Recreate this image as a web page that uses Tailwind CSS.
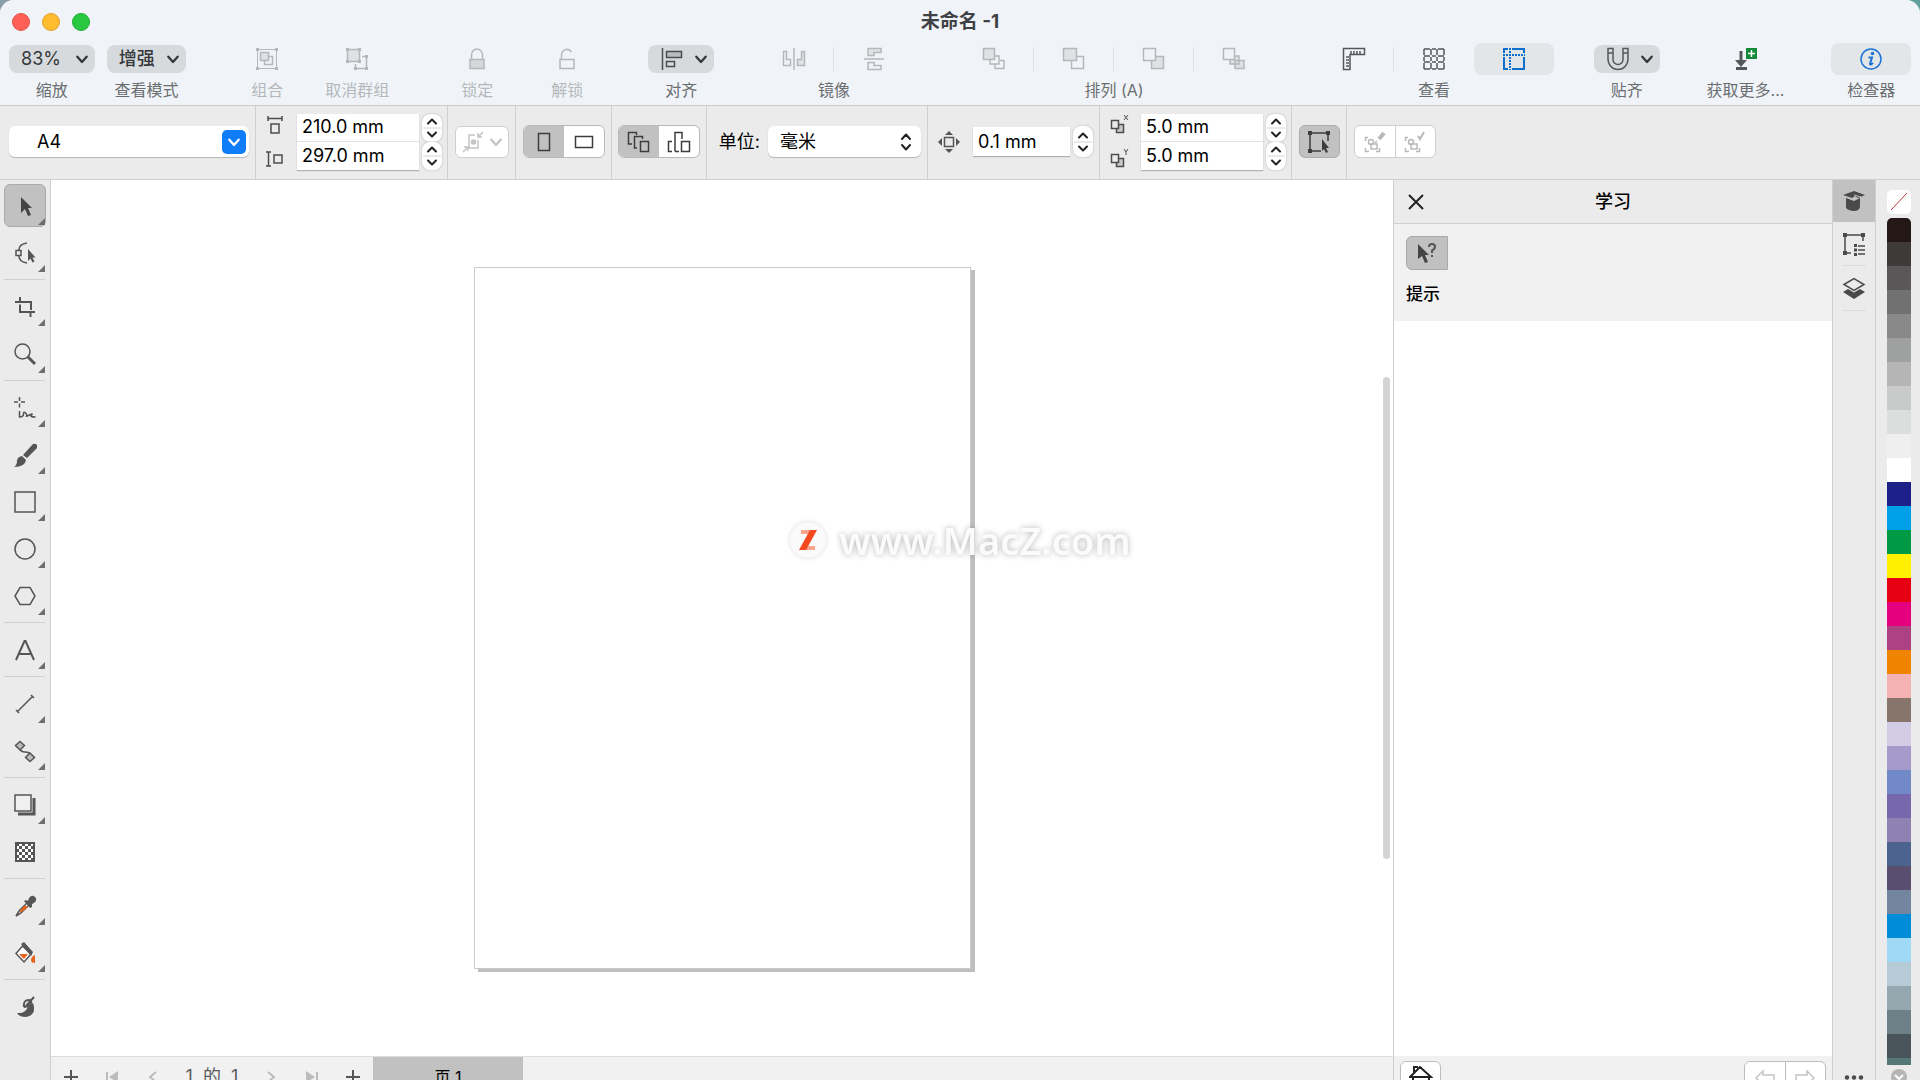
<!DOCTYPE html>
<html lang="zh-CN">
<head>
  <meta charset="UTF-8">
  <title>未命名 -1</title>
  <script src="https://cdn.jsdelivr.net/npm/@tailwindcss/browser@4"></script>
</head>
<body class="h-screen overflow-hidden bg-linear-to-r from-[#8b9fa9] to-[#5fa09f] font-['Inter','Noto_Sans_CJK_SC',sans-serif] text-lg text-[#1c1c1c]">

  <!-- 共用图标 -->
  <svg class="hidden">
    <symbol id="chevron" viewBox="0 0 12 12"><path d="M2 4l4 4.500L10 4" fill="none" stroke="currentColor" stroke-width="2" stroke-linecap="round" stroke-linejoin="round"/></symbol>
    <symbol id="stepper" viewBox="0 0 20 28">
      <path d="M1 14h18" stroke="#d4d4d4"/>
      <path d="M6 9.500l4-4 4 4M6 18.500l4 4 4-4" fill="none" stroke="#222" stroke-width="2" stroke-linecap="round" stroke-linejoin="round"/>
    </symbol>
    <symbol id="flyout" viewBox="0 0 7 7"><path d="M7 0v7H0z" fill="#6e6e6e"/></symbol>
  </svg>

  <div class="flex h-full flex-col overflow-hidden rounded-t-[14px] bg-[#ebebeb]">

    <!-- 标题栏与主工具栏 -->
    <header class="shrink-0 border-b border-[#cbcdcf] bg-[#f0f4f8] pb-[5px]">
      <div class="relative flex h-[43px] items-center justify-center">
        <div class="absolute left-3 flex gap-3">
          <button aria-label="关闭" class="size-[18px] rounded-full border border-[#e2544c] bg-[#fe5f57]"></button>
          <button aria-label="最小化" class="size-[18px] rounded-full border border-[#e2a02f] bg-[#febc2e]"></button>
          <button aria-label="缩放窗口" class="size-[18px] rounded-full border border-[#1fae34] bg-[#28c840]"></button>
        </div>
        <h1 class="text-[19px] font-bold text-[#3f4245]">未命名 -1</h1>
      </div>

      <div class="flex px-[9px] text-base leading-5 text-[#6b6e71]">
        <div class="flex w-[86px] flex-col items-center gap-[5px]">
          <div class="relative flex h-8 w-full items-center">
            <select id="zoom" class="h-7 w-full appearance-none rounded-lg bg-[#d7dadd] pl-3 text-lg leading-7 text-[#35383b]"><option>83%</option></select>
            <svg class="pointer-events-none absolute right-[6px] size-[14px] text-[#35383b]"><use href="#chevron"/></svg>
          </div>
          <label for="zoom">缩放</label>
        </div>
        <div class="ml-3 flex w-[80px] flex-col items-center gap-[5px]">
          <div class="relative flex h-8 w-full items-center">
            <select id="viewMode" class="h-7 w-full appearance-none rounded-lg bg-[#d7dadd] pl-3 text-lg leading-7 font-medium text-[#35383b]"><option>增强</option></select>
            <svg class="pointer-events-none absolute right-[6px] size-[14px] text-[#35383b]"><use href="#chevron"/></svg>
          </div>
          <label for="viewMode">查看模式</label>
        </div>

        <div class="ml-9 flex text-[#b4b8bb]">
          <button class="flex w-[90px] flex-col items-center gap-[5px]">
            <span class="flex h-8 items-center"><svg width="24" height="24" fill="none" stroke="currentColor"><path d="M2.500 2.500h19v19h-19z"/><path d="M9 9.500h8.500v8H9.500V14" stroke-width="1.500"/><path d="M5.500 5.500h8v8h-8z" fill="#dfe2e5" stroke-width="1.500"/><path d="M1 1h3v3H1zM20 1h3v3h-3zM1 20h3v3H1zM20 20h3v3h-3z" fill="currentColor" stroke="none"/></svg></span>
            <span>组合</span>
          </button>
          <button class="flex w-[90px] flex-col items-center gap-[5px]">
            <span class="flex h-8 items-center"><svg width="24" height="24" fill="none" stroke="currentColor"><path d="M2.500 2.500h12v12h-12z" fill="#dfe2e5" stroke-width="1.500"/><path d="M17 9.500h4.500v12h-11V17" stroke-width="1.500"/><path d="M1 1h3v3H1zM13 1h3v3h-3zM1 13h3v3H1zM13 13h3v3h-3zM20 8h3v3h-3zM9 20h3v3H9zM20 20h3v3h-3z" fill="currentColor" stroke="none"/></svg></span>
            <span>取消群组</span>
          </button>
        </div>
        <div class="ml-[30px] flex text-[#b4b8bb]">
          <button class="flex w-[90px] flex-col items-center gap-[5px]">
            <span class="flex h-8 items-center"><svg width="24" height="24" fill="none" stroke="currentColor" stroke-width="1.500"><path d="M6.500 13V8a5.500 6 0 0 1 11 0v5"/><path d="M5 12.500h14v9H5z" fill="#d5d8da"/></svg></span>
            <span>锁定</span>
          </button>
          <button class="flex w-[90px] flex-col items-center gap-[5px]">
            <span class="flex h-8 items-center"><svg width="24" height="24" fill="none" stroke="currentColor" stroke-width="1.500"><path d="M6.500 13V8a5.500 6 0 0 1 10-3"/><path d="M5 12.500h14v9H5z"/></svg></span>
            <span>解锁</span>
          </button>
        </div>

        <button class="ml-9 flex w-[66px] flex-col items-center gap-[5px]">
          <span class="flex h-8 w-full items-center">
            <span class="flex h-7 w-full items-center justify-between rounded-lg bg-[#d7dadd] pr-[6px] pl-3 text-[#35383b]">
              <svg width="24" height="24" fill="none" stroke="#4a4d50" stroke-width="1.500"><path d="M2.500 1v22"/><path d="M6.500 4.500h15v6h-15z" fill="#b9bcbf"/><path d="M6.500 14.500h8v5h-8z"/></svg>
              <svg class="size-[14px]"><use href="#chevron"/></svg>
            </span>
          </span>
          <span>对齐</span>
        </button>

        <div class="ml-10 flex flex-col items-center gap-[5px]">
          <div class="flex h-8 text-[#b4b8bb]">
            <button aria-label="水平镜像" class="flex w-20 items-center justify-center"><svg width="24" height="24" fill="none" stroke="currentColor" stroke-width="1.500"><path d="M12 1v22"/><path d="M1.500 4.500h3v8h4v6h-7z"/><path d="M22.500 4.500h-3v8h-4v6h7z" fill="#dfe2e5"/></svg></button>
            <span class="-ml-px h-6 w-px self-center bg-[#dde1e5]"></span>
            <button aria-label="垂直镜像" class="flex w-20 items-center justify-center"><svg width="24" height="24" fill="none" stroke="currentColor" stroke-width="1.500"><path d="M2 12h20"/><path d="M6 1.500h13v4h-7v3H6z" fill="#dfe2e5"/><path d="M6 22.500h13v-4h-7v-3H6z"/></svg></button>
          </div>
          <span>镜像</span>
        </div>

        <div class="ml-10 flex flex-col items-center gap-[5px]">
          <div class="flex h-8 text-[#b4b8bb]">
            <button aria-label="到图层前面" class="flex w-20 items-center justify-center"><svg width="24" height="24" fill="none" stroke="currentColor" stroke-width="1.500"><path d="M13 17v4.500h9v-8h-4M8 12v5h9V9h-4"/><path d="M1.500 1.500h11v11h-11z" fill="#dfe2e5"/></svg></button>
            <span class="-ml-px h-6 w-px self-center bg-[#dde1e5]"></span>
            <button aria-label="向前一层" class="flex w-20 items-center justify-center"><svg width="24" height="24" fill="none" stroke="currentColor" stroke-width="1.500"><path d="M9.500 9.500h12v12h-12z"/><path d="M1.500 1.500h13v12h-13z" fill="#dfe2e5"/></svg></button>
            <span class="-ml-px h-6 w-px self-center bg-[#dde1e5]"></span>
            <button aria-label="向后一层" class="flex w-20 items-center justify-center"><svg width="24" height="24" fill="none" stroke="currentColor" stroke-width="1.500"><path d="M9.500 9.500h12v12h-12z" fill="#dfe2e5"/><path d="M1.500 1.500h12v12h-12z" fill="#f0f4f8"/></svg></button>
            <span class="-ml-px h-6 w-px self-center bg-[#dde1e5]"></span>
            <button aria-label="到图层后面" class="flex w-20 items-center justify-center"><svg width="24" height="24" fill="none" stroke="currentColor" stroke-width="1.500"><path d="M13 13.500h9v8h-9zM8 9h9v8H8z" fill="#dfe2e5"/><path d="M1.500 1.500h11v11h-11z" fill="#f0f4f8"/></svg></button>
          </div>
          <span>排列 (A)</span>
        </div>

        <div class="ml-10 flex flex-col items-center gap-[5px]">
          <div class="flex h-8 text-[#55585b]">
            <button aria-label="标尺" class="flex w-20 items-center justify-center"><svg width="24" height="24" fill="none" stroke="currentColor" stroke-width="1.500"><path d="M1.500 1.500h21v6H8v15H1.500z"/><path d="M9 7V4M12 7V4M15 7V4M18 7V4M7 10H4M7 13H4M7 16H4M7 19H4"/></svg></button>
            <span class="-ml-px h-6 w-px self-center bg-[#dde1e5]"></span>
            <button aria-label="网格" class="flex w-20 items-center justify-center"><svg width="24" height="24" fill="none" stroke="currentColor" stroke-width="1.500"><path d="M2 2h6M10 2h4M16 2h6M2 9h6M10 9h4M16 9h6M2 15h6M10 15h4M16 15h6M2 22h6M10 22h4M16 22h6M2 2v6M2 10v4M2 16v6M9 2v6M9 10v4M9 16v6M15 2v6M15 10v4M15 16v6M22 2v6M22 10v4M22 16v6"/></svg></button>
            <button aria-label="辅助线" class="flex w-20 items-center justify-center rounded-lg bg-[#e2e6e9]"><svg width="24" height="24" fill="none" stroke="#0e70cb" stroke-width="2"><path d="M2 2h20v20H2z"/><path d="M8 1v22M1 8h22" stroke="#e2e6e9" stroke-width="4"/><path d="M8 1v22M1 8h22" stroke-dasharray="2 1"/></svg></button>
          </div>
          <span>查看</span>
        </div>

        <button class="ml-10 flex w-[66px] flex-col items-center gap-[5px]">
          <span class="flex h-8 w-full items-center">
            <span class="flex h-7 w-full items-center justify-between rounded-lg bg-[#d7dadd] pr-[6px] pl-3 text-[#35383b]">
              <svg width="24" height="24" fill="none" stroke="#55585b" stroke-width="1.500"><path d="M2 1.500h5v11a5 5 0 0 0 10 0v-11h5V12a10 10.500 0 0 1-20 0z"/><path d="M2 6h5M17 6h5"/></svg>
              <svg class="size-[14px]"><use href="#chevron"/></svg>
            </span>
          </span>
          <span>贴齐</span>
        </button>

        <button class="ml-10 flex w-[92px] flex-col items-center gap-[5px]">
          <span class="flex h-8 items-center"><svg width="24" height="24"><path d="M7 4v12M2 21.500h11" stroke="#55585b" stroke-width="3"/><path d="M1 13h12l-6 7z" fill="#55585b"/><path d="M12 1h11v11H12z" fill="#128a3a"/><path d="M17.500 3v7M14 6.500h7" stroke="#fff" stroke-width="1.500"/></svg></span>
          <span>获取更多...</span>
        </button>

        <button class="ml-10 flex w-20 flex-col items-center gap-[5px]">
          <span class="flex h-8 w-full items-center justify-center rounded-lg bg-[#e2e6e9]"><svg width="24" height="24"><circle cx="12" cy="12" r="10" fill="none" stroke="#1a73d6" stroke-width="1.500"/><circle cx="13.500" cy="6.500" r="1.700" fill="#1a73d6"/><path d="M9.500 10.500h3.500l-2 6.500q0 1.500 3-1" fill="none" stroke="#1a73d6" stroke-width="2"/></svg></span>
          <span>检查器</span>
        </button>
      </div>
    </header>

    <!-- 属性栏 -->
    <div class="flex h-[74px] shrink-0 items-stretch border-b border-[#cfcfcf] text-black *:pb-[2px]">
      <div class="flex w-[256px] items-center border-r border-[#d0d0d0] pl-[9px]">
        <div class="relative flex w-[240px] items-center">
          <select aria-label="页面大小" class="h-[31px] w-full appearance-none rounded-md bg-white pl-7 leading-[31px] shadow-[0_1px_1px_#b5b5b5]"><option>A4</option></select>
          <span class="pointer-events-none absolute right-[3px] flex size-6 items-center justify-center rounded-[5px] bg-[#0f7cf8] text-white"><svg class="size-[14px]"><use href="#chevron"/></svg></span>
        </div>
      </div>

      <div class="flex w-[192px] items-center gap-[3px] border-r border-[#d0d0d0] pl-[10px]">
        <div class="mr-[10px] flex flex-col gap-4 text-[#4d4d4d]">
          <svg width="18" height="18" fill="none" stroke="currentColor" stroke-width="1.500"><path d="M2 2.500h14M2 0v5M16 0v5M5 8h8v9H5z"/></svg>
          <svg width="18" height="18" fill="none" stroke="currentColor" stroke-width="1.500"><path d="M2.500 2v14M0 2h5M0 16h5M8 5h8v8H8z"/></svg>
        </div>
        <div class="flex flex-col divide-y divide-[#e2e2e2] bg-white shadow-[0_1px_1px_#b0b0b0]">
          <input aria-label="页面宽度" value="210.0 mm" class="h-7 w-[122px] px-[5px]">
          <input aria-label="页面高度" value="297.0 mm" class="h-7 w-[122px] px-[5px]">
        </div>
        <div class="flex flex-col">
          <button aria-label="调整宽度" class="h-7 w-5 rounded-lg bg-white shadow-[0_0_2px_#aaa]"><svg class="h-7 w-5"><use href="#stepper"/></svg></button>
          <button aria-label="调整高度" class="h-7 w-5 rounded-lg bg-white shadow-[0_0_2px_#aaa]"><svg class="h-7 w-5"><use href="#stepper"/></svg></button>
        </div>
      </div>

      <div class="flex w-[68px] items-center justify-center border-r border-[#d0d0d0]">
        <button aria-label="适合页面" class="flex h-8 w-[54px] items-center justify-center gap-1 rounded-md border border-[#cfcfcf] bg-white text-[#c4c4c4]">
          <svg width="24" height="24" fill="none" stroke="currentColor" stroke-width="1.500"><path d="M14 5H8v13h9V10"/><circle cx="12.500" cy="12" r="2" fill="currentColor"/><path d="M22 2l-5 5m0-4v4h4M2 22l5-5m0 4v-4H3"/></svg>
          <svg class="size-[14px]"><use href="#chevron"/></svg>
        </button>
      </div>

      <div class="flex w-[96px] items-center justify-center border-r border-[#d0d0d0]">
        <div class="flex h-[33px] w-[82px] overflow-hidden rounded-md border border-[#b9b9b9] bg-white text-[#3d3d3d]">
          <button aria-label="纵向" class="flex flex-1 items-center justify-center bg-[#c1c1c1]"><svg width="24" height="24" fill="none" stroke="currentColor" stroke-width="1.500"><path d="M6.500 3.500h11v17h-11z"/></svg></button>
          <button aria-label="横向" class="flex flex-1 items-center justify-center"><svg width="24" height="24" fill="none" stroke="currentColor" stroke-width="1.500"><path d="M3.500 6.500h17v11h-17z"/></svg></button>
        </div>
      </div>

      <div class="flex w-[95px] items-center justify-center border-r border-[#d0d0d0]">
        <div class="flex h-[33px] w-[82px] overflow-hidden rounded-md border border-[#b9b9b9] bg-white text-[#3d3d3d]">
          <button aria-label="所有页面" class="flex flex-1 items-center justify-center bg-[#c1c1c1]"><svg width="24" height="24" fill="none" stroke="currentColor" stroke-width="1.500"><path d="M5 14H1.500V2.500h8V5"/><path d="M10 18H7.500V6.500h8V9"/><path d="M13.500 11.500h8v10h-8z"/></svg></button>
          <button aria-label="当前页面" class="flex flex-1 items-center justify-center"><svg width="24" height="24" fill="none" stroke="currentColor" stroke-width="1.500"><path d="M5 11.500H1.500v10H5M8 21.500V2.500h7V9M8 21.500h4"/><path d="M14.500 11.500h8v10h-8z"/></svg></button>
        </div>
      </div>

      <div class="flex w-[221px] items-center justify-end gap-2 border-r border-[#d0d0d0] pr-[6px]">
        <label for="unit">单位:</label>
        <div class="relative flex w-[153px] items-center">
          <select id="unit" class="h-[31px] w-full appearance-none rounded-md bg-white pl-3 leading-[31px] shadow-[0_1px_1px_#b5b5b5]"><option>毫米</option></select>
          <svg class="pointer-events-none absolute right-2" width="14" height="22" fill="none" stroke="#222" stroke-width="2" stroke-linecap="round" stroke-linejoin="round"><path d="M3 8l4-4.500L11 8M3 14l4 4.500 4-4.500"/></svg>
        </div>
      </div>

      <div class="flex w-[172px] items-center gap-[3px] border-r border-[#d0d0d0] pl-[10px]">
        <svg class="mr-[10px]" width="22" height="22"><path d="M6.500 6.500h9v9h-9z" fill="none" stroke="#555" stroke-width="1.500"/><path d="M11 0l4 4H7zM11 22l4-4H7zM0 11l4-4v8zM22 11l-4-4v8z" fill="#555"/></svg>
        <input aria-label="微调距离" value="0.1 mm" class="h-[29px] w-[97px] bg-white px-[5px] shadow-[0_1px_1px_#b0b0b0]">
        <button aria-label="调整微调距离" class="flex h-[31px] w-5 items-center rounded-lg bg-white shadow-[0_0_2px_#aaa]"><svg class="h-7 w-5"><use href="#stepper"/></svg></button>
      </div>

      <div class="flex w-[192px] items-center gap-[3px] border-r border-[#d0d0d0] pl-[10px]">
        <div class="mr-2 flex flex-col gap-3 text-[#4d4d4d]">
          <svg width="20" height="22" fill="none" stroke="currentColor" stroke-width="1.500"><path d="M7 10.500h6.500v8h-7V15" fill="#c8c8c8"/><path d="M1.500 6.500h7v8h-7z" fill="#ebebeb"/><path d="M14 1l4 5M18 1l-4 5" stroke-width="1"/></svg>
          <svg width="20" height="22" fill="none" stroke="currentColor" stroke-width="1.500"><path d="M7 10.500h6.500v8h-7V15" fill="#c8c8c8"/><path d="M1.500 6.500h7v8h-7z" fill="#ebebeb"/><path d="M14 1l2 3 2-3M16 4v3" stroke-width="1"/></svg>
        </div>
        <div class="flex flex-col divide-y divide-[#e2e2e2] bg-white shadow-[0_1px_1px_#b0b0b0]">
          <input aria-label="再制距离 X" value="5.0 mm" class="h-7 w-[122px] px-[5px]">
          <input aria-label="再制距离 Y" value="5.0 mm" class="h-7 w-[122px] px-[5px]">
        </div>
        <div class="flex flex-col">
          <button aria-label="调整 X" class="h-7 w-5 rounded-lg bg-white shadow-[0_0_2px_#aaa]"><svg class="h-7 w-5"><use href="#stepper"/></svg></button>
          <button aria-label="调整 Y" class="h-7 w-5 rounded-lg bg-white shadow-[0_0_2px_#aaa]"><svg class="h-7 w-5"><use href="#stepper"/></svg></button>
        </div>
      </div>

      <div class="flex w-[55px] items-center justify-center border-r border-[#d0d0d0]">
        <button aria-label="视为已填充" class="flex h-[33px] w-[41px] items-center justify-center rounded-md border border-[#adadad] bg-[#c1c1c1]"><svg width="24" height="24" stroke="#3d3d3d" stroke-width="1.500" fill="none"><path d="M3 3h18v8M3 3v18h11"/><path d="M1 1h4v4H1zM19 1h4v4h-4zM1 19h4v4H1z" fill="#3d3d3d" stroke="none"/><path d="M15 9v12l2-2 2 4 2-1-2-4h3z" fill="#3d3d3d" stroke="none"/></svg></button>
      </div>

      <div class="flex items-center pl-[7px]">
        <div class="flex h-[33px] w-[82px] divide-x divide-[#cfcfcf] overflow-hidden rounded-md border border-[#cfcfcf] bg-white text-[#b9b9b9]">
          <button aria-label="编辑" class="flex flex-1 items-center justify-center"><svg width="24" height="24" fill="none" stroke="currentColor" stroke-width="1.500"><path d="M5 7.500H2.500V11M2.500 18v3.500H6M13 21.500h3.500V18"/><circle cx="8" cy="12" r="2.500"/><path d="M8 14h6v5H8z"/><path d="M21 3l-5 6" stroke-width="4"/><path d="M14 11l-2 2"/></svg></button>
          <button aria-label="完成" class="flex flex-1 items-center justify-center"><svg width="24" height="24" fill="none" stroke="currentColor" stroke-width="1.500"><path d="M5 7.500H2.500V11M2.500 18v3.500H6M13 21.500h3.500V18"/><circle cx="8" cy="12" r="2.500"/><path d="M8 14h6v5H8z"/><path d="M15 6l2 3 4-7" stroke-width="2"/></svg></button>
        </div>
      </div>
    </div>

    <div class="flex min-h-0 flex-1">

      <!-- 工具箱 -->
      <nav aria-label="工具箱" class="flex w-[51px] shrink-0 flex-col overflow-hidden border-r border-[#cfcfcf] pt-[2px] pr-[5px] pl-1 text-[#555] *:shrink-0">
        <button aria-label="选择" class="relative flex h-[47px] w-[42px] items-center justify-center">
          <span class="absolute inset-x-0 inset-y-[2px] rounded-md border border-[#ababab] bg-[#c1c1c1]"></span>
          <svg class="relative" width="24" height="24"><path d="M8 3v16l4-4 3 7 3-1-3-7h4z" fill="#444"/></svg>
          <svg class="absolute right-[1px] bottom-1 size-[7px]"><use href="#flyout"/></svg>
        </button>
        <button aria-label="形状" class="relative flex h-[47px] w-[42px] items-center justify-center">
          <svg width="24" height="24" fill="none" stroke="currentColor" stroke-width="1.500"><path d="M14 2Q6 3 6 9M6 15q0 6 8 7"/><path d="M3 9.500h5v5H3z"/><path d="M15 8v12l2.500-2.500 2 4 2-1-2-4h3z" fill="currentColor" stroke="none"/></svg>
          <svg class="absolute right-[1px] bottom-1 size-[7px]"><use href="#flyout"/></svg>
        </button>
        <hr class="my-[3px] border-[#d0d0d0]">
        <button aria-label="裁剪" class="relative flex h-[47px] w-[42px] items-center justify-center">
          <svg width="24" height="24" fill="none" stroke="currentColor" stroke-width="2"><path d="M2 7h16v8M7 2v4M7 9.500V17h15M17.500 18v4"/></svg>
          <svg class="absolute right-[1px] bottom-1 size-[7px]"><use href="#flyout"/></svg>
        </button>
        <button aria-label="缩放工具" class="relative flex h-[47px] w-[42px] items-center justify-center">
          <svg width="24" height="24" fill="none" stroke="currentColor"><circle cx="9.500" cy="9.500" r="7.500" stroke-width="1.500"/><path d="M15 15l7 7" stroke-width="3"/></svg>
          <svg class="absolute right-[1px] bottom-1 size-[7px]"><use href="#flyout"/></svg>
        </button>
        <hr class="my-[3px] border-[#d0d0d0]">
        <button aria-label="手绘" class="relative flex h-[47px] w-[42px] items-center justify-center">
          <svg width="24" height="24" fill="none" stroke="currentColor" stroke-width="1.500"><path d="M1 6h4M8 6h4M6.500 1v4M6.500 7.500v4M6.500 15v6q4 0 4-3t2-1 1 3 3-1 2 0 4 2"/></svg>
          <svg class="absolute right-[1px] bottom-1 size-[7px]"><use href="#flyout"/></svg>
        </button>
        <button aria-label="艺术笔" class="relative flex h-[47px] w-[42px] items-center justify-center">
          <svg width="24" height="24" fill="currentColor"><path d="M10 12L20 1q5-1 4 4L14 15zM9 13l4 4q-1 7-12 7 3-2 3-6t5-5"/></svg>
          <svg class="absolute right-[1px] bottom-1 size-[7px]"><use href="#flyout"/></svg>
        </button>
        <button aria-label="矩形" class="relative flex h-[47px] w-[42px] items-center justify-center">
          <svg width="24" height="24" fill="none" stroke="currentColor" stroke-width="1.500"><path d="M2 2h20v20H2z"/></svg>
          <svg class="absolute right-[1px] bottom-1 size-[7px]"><use href="#flyout"/></svg>
        </button>
        <button aria-label="椭圆形" class="relative flex h-[47px] w-[42px] items-center justify-center">
          <svg width="24" height="24" fill="none" stroke="currentColor" stroke-width="1.500"><circle cx="12" cy="12" r="10"/></svg>
          <svg class="absolute right-[1px] bottom-1 size-[7px]"><use href="#flyout"/></svg>
        </button>
        <button aria-label="多边形" class="relative flex h-[47px] w-[42px] items-center justify-center">
          <svg width="24" height="24" fill="none" stroke="currentColor" stroke-width="1.500"><path d="M2 12l5-8.500h10l5 8.500-5 8.500H7z"/></svg>
          <svg class="absolute right-[1px] bottom-1 size-[7px]"><use href="#flyout"/></svg>
        </button>
        <hr class="my-[3px] border-[#d0d0d0]">
        <button aria-label="文本" class="relative flex h-[47px] w-[42px] items-center justify-center">
          <svg width="24" height="24" fill="none" stroke="currentColor" stroke-width="2"><path d="M3 22l8.500-19h1L21 22M6 16h12"/></svg>
          <svg class="absolute right-[1px] bottom-1 size-[7px]"><use href="#flyout"/></svg>
        </button>
        <hr class="my-[3px] border-[#d0d0d0]">
        <button aria-label="平行度量" class="relative flex h-[47px] w-[42px] items-center justify-center">
          <svg width="24" height="24" fill="none" stroke="currentColor" stroke-width="1.500"><path d="M4.500 19.500l15-15M3 18l3 3M18 3l3 3"/></svg>
          <svg class="absolute right-[1px] bottom-1 size-[7px]"><use href="#flyout"/></svg>
        </button>
        <button aria-label="连接器" class="relative flex h-[47px] w-[42px] items-center justify-center">
          <svg width="24" height="24" fill="none" stroke="currentColor" stroke-width="1.500"><path d="M7 10q1 3 5 3t5 2"/><path d="M7 2.500l4.500 4L7 11 2.500 6.500zM17 14l4.500 4.500L17 22.500l-4.500-4z" fill="#bbb"/></svg>
          <svg class="absolute right-[1px] bottom-1 size-[7px]"><use href="#flyout"/></svg>
        </button>
        <hr class="my-[3px] border-[#d0d0d0]">
        <button aria-label="阴影" class="relative flex h-[47px] w-[42px] items-center justify-center">
          <svg width="24" height="24"><path d="M21 5v16H5" fill="none" stroke="currentColor" stroke-width="3"/><path d="M2 2h16v16H2z" fill="#f0f0f0" stroke="currentColor" stroke-width="1.500"/></svg>
          <svg class="absolute right-[1px] bottom-1 size-[7px]"><use href="#flyout"/></svg>
        </button>
        <button aria-label="透明度" class="relative flex h-[47px] w-[42px] items-center justify-center">
          <svg width="20" height="20"><defs><pattern id="checker" x="1" y="1" width="6" height="6" patternUnits="userSpaceOnUse"><path d="M0 0h3v3H0zM3 3h3v3H3z" fill="#555"/></pattern></defs><path d="M1 1h18v18H1z" fill="#fff"/><path d="M1 1h18v18H1z" fill="url(#checker)" stroke="#555" stroke-width="2"/></svg>
        </button>
        <hr class="my-[3px] border-[#d0d0d0]">
        <button aria-label="颜色滴管" class="relative flex h-[47px] w-[42px] items-center justify-center">
          <svg width="24" height="24"><path d="M14 9l-8 8-3 5 5-3 8-8z" fill="#fff" stroke="currentColor" stroke-width="1.500"/><path d="M11 12l-4 5v2l6-4 2-3z" fill="#e8641b"/><path d="M11 7l2-1 2 1 1-3q3-4 6-1t-1 6l-2 1 0 3-2 1z" fill="currentColor"/></svg>
          <svg class="absolute right-[1px] bottom-1 size-[7px]"><use href="#flyout"/></svg>
        </button>
        <button aria-label="交互式填充" class="relative flex h-[47px] w-[42px] items-center justify-center">
          <svg width="24" height="24"><path d="M9.500 5l8.500 8-7 8-8-8.500z" fill="#fff" stroke="currentColor" stroke-width="1.500"/><path d="M6 13h9l-4 5z" fill="#e8641b"/><path d="M8 3l3-2 9 10-2 4z" fill="currentColor"/><path d="M22 14v8q-4 0-4-3t4-5" fill="#e8641b"/></svg>
          <svg class="absolute right-[1px] bottom-1 size-[7px]"><use href="#flyout"/></svg>
        </button>
        <hr class="my-[3px] border-[#d0d0d0]">
        <button aria-label="绘画" class="relative flex h-[47px] w-[42px] items-center justify-center">
          <svg width="24" height="24"><path d="M4 18q9 1 11-7l5-3q4 12-7 14-7 0-9-4" fill="currentColor"/><path d="M11 12q-1-7 5-7 4 1 1 5-4 2-6 2M13 11l8-9" fill="none" stroke="currentColor" stroke-width="2"/></svg>
        </button>
      </nav>

      <!-- 画布 -->
      <main class="flex min-w-0 flex-1 flex-col">
        <div class="relative flex min-h-0 flex-1 items-center justify-center bg-white">
          <div class="h-[702px] w-[497px] border border-[#cacaca] bg-white shadow-[4px_3px_0_#bfbfbf]"></div>
          <div class="absolute top-[197px] right-[3px] h-[482px] w-[7px] rounded-full bg-[#d4d4d4]"></div>
        </div>
        <!-- 页面导航 -->
        <div class="h-6 shrink-0 overflow-hidden border-t border-[#dcdcdc] bg-[#f1f1f1]">
          <div class="flex h-10 items-center text-[#bcbcbc]">
            <button aria-label="在前面添加页" class="flex w-10 justify-center"><svg width="14" height="14" stroke="#555" stroke-width="2"><path d="M7 0v14M0 7h14"/></svg></button>
            <button aria-label="第一页" class="flex w-[41px] justify-center"><svg width="14" height="12"><path d="M2 1v10" stroke="currentColor" stroke-width="2"/><path d="M13 0v12L4 6z" fill="currentColor"/></svg></button>
            <button aria-label="上一页" class="flex w-[41px] justify-center"><svg width="12" height="12" fill="none" stroke="currentColor" stroke-width="2"><path d="M9 1L3 6l6 5"/></svg></button>
            <span class="w-[78px] text-center text-lg whitespace-pre text-[#5c5c5c]">1  的  1</span>
            <button aria-label="下一页" class="flex w-[40px] justify-center"><svg width="12" height="12" fill="none" stroke="currentColor" stroke-width="2"><path d="M3 1l6 5-6 5"/></svg></button>
            <button aria-label="最后一页" class="flex w-[41px] justify-center"><svg width="14" height="12"><path d="M12 1v10" stroke="currentColor" stroke-width="2"/><path d="M1 0v12l9-6z" fill="currentColor"/></svg></button>
            <button aria-label="在后面添加页" class="flex w-[41px] justify-center"><svg width="14" height="14" stroke="#555" stroke-width="2"><path d="M7 0v14M0 7h14"/></svg></button>
            <button class="h-full w-[150px] bg-[#c1c1c1] text-base text-black">页 1</button>
          </div>
        </div>
      </main>

      <!-- 学习面板 -->
      <aside class="flex w-[439px] shrink-0 flex-col border-l border-[#cfcfcf]">
        <div class="relative flex h-[44px] shrink-0 items-center justify-center border-b border-[#cfcfcf]">
          <button aria-label="关闭面板" class="absolute left-[14px]"><svg width="16" height="16" stroke="#222" stroke-width="2"><path d="M1 1l14 14M15 1L1 15"/></svg></button>
          <h2 class="font-medium text-black">学习</h2>
        </div>
        <div class="flex h-[97px] shrink-0 flex-col items-start bg-[#f1f1f1] px-3 pt-3 text-black">
          <button aria-label="提示工具" class="flex h-[34px] w-[42px] items-center justify-center rounded-l-md border border-[#a9a9a9] bg-[#c1c1c1]"><svg width="22" height="22"><path d="M2 2v15l4-3 3 7 3-1-3-7h4z" fill="#444"/><path d="M13 5q0-3 3-3t3 2.500-3 4V11M16 13v2" fill="none" stroke="#555" stroke-width="2"/></svg></button>
          <h3 class="mt-3 text-[17px] leading-6 font-medium">提示</h3>
        </div>
        <div class="min-h-0 flex-1 bg-white"></div>
        <div class="h-6 shrink-0 overflow-hidden bg-[#f1f1f1]">
          <div class="flex justify-between px-[6px] pt-[5px]">
            <button aria-label="主页" class="flex h-[33px] w-[41px] justify-center rounded-md border border-[#bdbdbd] bg-white pt-1"><svg width="24" height="24" fill="none" stroke="#222" stroke-width="2"><path d="M1 11L11 1l11 10zM4 11v11h16V11M5 7V1h4"/></svg></button>
            <div class="flex h-[33px] w-[82px] divide-x divide-[#bdbdbd] rounded-md border border-[#bdbdbd] bg-white text-[#c4c4c4]">
              <button aria-label="后退" class="flex flex-1 justify-center pt-1"><svg width="24" height="24" fill="none" stroke="currentColor" stroke-width="1.500"><path d="M3 12l7-7v4h11v6H10v4z"/></svg></button>
              <button aria-label="前进" class="flex flex-1 justify-center pt-1"><svg width="24" height="24" fill="none" stroke="currentColor" stroke-width="1.500"><path d="M21 12l-7-7v4H3v6h11v4z"/></svg></button>
            </div>
          </div>
        </div>
      </aside>

      <!-- 检查器标签 -->
      <div class="flex w-[44px] shrink-0 flex-col items-center overflow-hidden border-x border-[#cfcfcf] text-[#4a4a4a]">
        <button aria-label="学习" class="flex h-[42px] w-full shrink-0 items-center justify-center bg-[#c1c1c1]"><svg width="24" height="24" fill="currentColor"><path d="M1 6l11-4 11 4-7 3-3-2-3 2z"/><path d="M4 9l8 3 6-3v9q-1 4-6 4t-8-3z"/><path d="M12 6l7 2v9" fill="none" stroke="#c1c1c1" stroke-width="1"/></svg></button>
        <button aria-label="属性" class="flex h-[44px] w-6 shrink-0 items-center justify-center border-b border-[#dcdcdc]"><svg width="24" height="24" fill="none" stroke="currentColor" stroke-width="1.500"><path d="M3 3h18v6M3 3v18h6M16 14h7M16 18h7M16 22h7"/><path d="M1 1h4v4H1zM19 1h4v4h-4zM1 19h4v4H1zM12 12h3v3h-3zM12 16.500h3v3h-3zM12 21h3v3h-3z" fill="currentColor" stroke="none"/></svg></button>
        <button aria-label="对象" class="flex h-[45px] w-6 shrink-0 items-center justify-center border-b border-[#dcdcdc]"><svg width="24" height="24"><path d="M2 8.500L12 2.500l10 6-10 6z" fill="none" stroke="currentColor" stroke-width="1.500"/><path d="M1 16l5-3 6 3.500 6-3.500 5 3-11 7z" fill="currentColor"/></svg></button>
        <button aria-label="更多" class="mt-auto h-[5px] w-5 shrink-0"><svg width="20" height="5" fill="currentColor"><circle cx="3" cy="2.500" r="2.200"/><circle cx="10" cy="2.500" r="2.200"/><circle cx="17" cy="2.500" r="2.200"/></svg></button>
      </div>

      <!-- 调色板 -->
      <div class="flex w-[44px] shrink-0 flex-col items-center overflow-hidden pt-[10px] pl-[2px]">
        <button aria-label="无填充" class="size-6 shrink-0 rounded-[5px] bg-white"><svg width="24" height="24" stroke="#c22f3f"><path d="M4 20L20 3"/></svg></button>
        <div id="palette" class="mt-1 flex min-h-0 flex-1 flex-col overflow-hidden rounded-t-[5px]"></div>
        <button aria-label="展开调色板" class="mt-1 h-[11px] shrink-0 overflow-hidden"><svg width="16" height="16"><circle cx="8" cy="8" r="8" fill="#b5b5b5"/><path d="M4 6l4 4 4-4" fill="none" stroke="#fff" stroke-width="2"/></svg></button>
      </div>
    </div>
  </div>

  <!-- 水印 -->
  <div class="pointer-events-none fixed inset-0 flex items-center justify-center gap-3">
    <svg class="drop-shadow-[0_0_2px_rgba(0,0,0,0.15)]" width="38" height="38"><circle cx="19" cy="19" r="18" fill="#fafafa"/><path d="M12 9h13v4H12zM13 25h13v4H13z" fill="#f9a48d"/><path d="M21 9h7L17 29h-7z" fill="#f4481e"/></svg>
    <span class="font-['Noto_Sans',sans-serif] text-[38px] leading-none font-semibold text-[#fbfbfb] [text-shadow:0_0_6px_rgba(0,0,0,0.3)]">www.MacZ.com</span>
  </div>

  <script>
    const colors = [
      "#231815", "#3e3a39", "#595757", "#727171", "#898989", "#9fa0a0", "#b5b5b6", "#c9caca", "#dcdddd", "#efefef", "#ffffff",
      "#1d2088", "#00a0e9", "#009944", "#fff100", "#e60012", "#e4007f", "#ad4283", "#f08300", "#f5b2b2", "#87746a",
      "#d2cce6", "#a59aca", "#7189c7", "#7768ae", "#8f82b3", "#4d638f", "#5a4e6e", "#7386a0", "#008cd6", "#9fd9f6",
      "#b7cbd7", "#95a8b0", "#6f7f87", "#48535a", "#557775"
    ];
    const palette = document.getElementById("palette");
    colors.forEach(color => {
      const swatch = document.createElement("button");
      swatch.className = "h-6 w-6 shrink-0";
      swatch.style.backgroundColor = color;
      swatch.setAttribute("aria-label", color);
      palette.appendChild(swatch);
    });
  </script>

</body>
</html>
